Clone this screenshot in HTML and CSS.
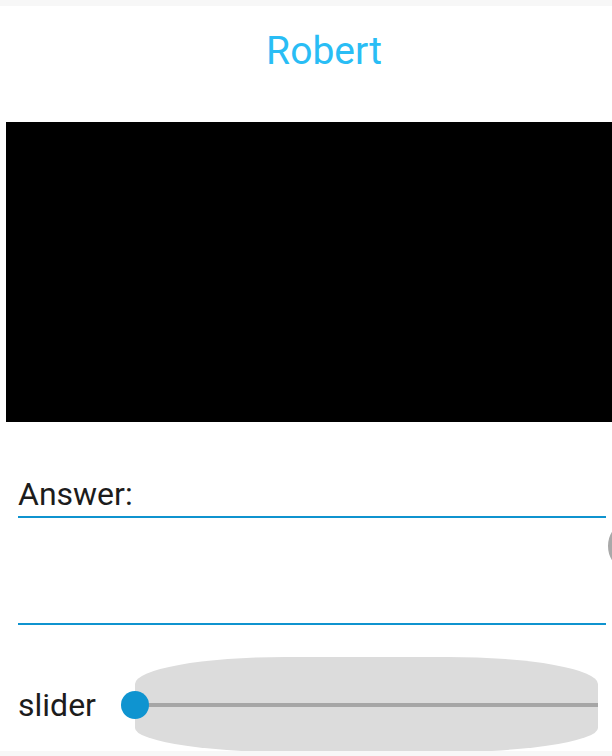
FILE: index.html
```html
<!DOCTYPE html>
<html>
<head>
<meta charset="utf-8">
<link rel="stylesheet" href="styles.css">
</head>
<body>
<div class="page">
  <div class="status"></div>
  <header class="header"><h1 class="title">Robert</h1></header>
  <div class="video"></div>
  <main class="form">
    <div class="label">Answer:</div>
    <div class="field"></div>
    <div class="knob"></div>
    <div class="slider-row">
      <span class="slider-label">slider</span>
      <div class="slider">
        <div class="track"></div>
        <div class="thumb"></div>
      </div>
    </div>
  </main>
  <div class="footer"></div>
</div>
</body>
</html>
```
FILE: styles.css
```css
html, body {
  margin: 0;
  padding: 0;
  background: #ffffff;
}
.page {
  width: 612px;
  height: 756px;
  display: flex;
  flex-direction: column;
  overflow: hidden;
  font-family: Roboto, "Liberation Sans", sans-serif;
  position: relative;
}
.status {
  height: 6px;
  background: #f7f7f7;
  flex: none;
}
.header {
  height: 116px;
  flex: none;
  display: flex;
  justify-content: center;
  padding-top: 25px;
  box-sizing: border-box;
}
.title {
  margin: 0;
  font-weight: 400;
  font-size: 39px;
  line-height: 40px;
  color: #29bdf5;
  padding-left: 36px;
}
.video {
  height: 300px;
  margin-left: 6px;
  background: #000000;
  flex: none;
}
.form {
  flex: 1;
  padding: 0 6px 0 18px;
  position: relative;
  overflow: hidden;
}
.label {
  margin-top: 53px;
  font-size: 32px;
  line-height: 38px;
  color: #1c1c1c;
  padding-bottom: 3px;
  border-bottom: 2px solid #0f93cf;
}
.field {
  height: 105px;
  border-bottom: 2px solid #0f93cf;
}
.knob {
  position: absolute;
  left: 608px;
  top: 97px;
  width: 54px;
  height: 54px;
  box-sizing: border-box;
  border-radius: 50%;
  border: 4px solid #a9a9a9;
  background: #ffffff;
}
.slider-row {
  display: flex;
  align-items: center;
  margin-top: 32px;
  height: 96px;
}
.slider-label {
  font-size: 32px;
  line-height: 38px;
  color: #1c1c1c;
  width: 117px;
  flex: none;
}
.slider {
  position: relative;
  width: 463px;
  height: 96px;
  background: #dcdcdc;
  border-radius: 150px 150px 175px 175px / 27px 27px 25px 25px;
  display: flex;
  align-items: center;
}
.track {
  height: 4px;
  width: 100%;
  background: #a6a6a6;
}
.thumb {
  position: absolute;
  left: -14px;
  top: 34px;
  width: 28px;
  height: 28px;
  border-radius: 50%;
  background: #0f94d0;
}
.footer {
  height: 5px;
  background: #f7f7f7;
  flex: none;
  position: relative;
  z-index: 1;
}
```
